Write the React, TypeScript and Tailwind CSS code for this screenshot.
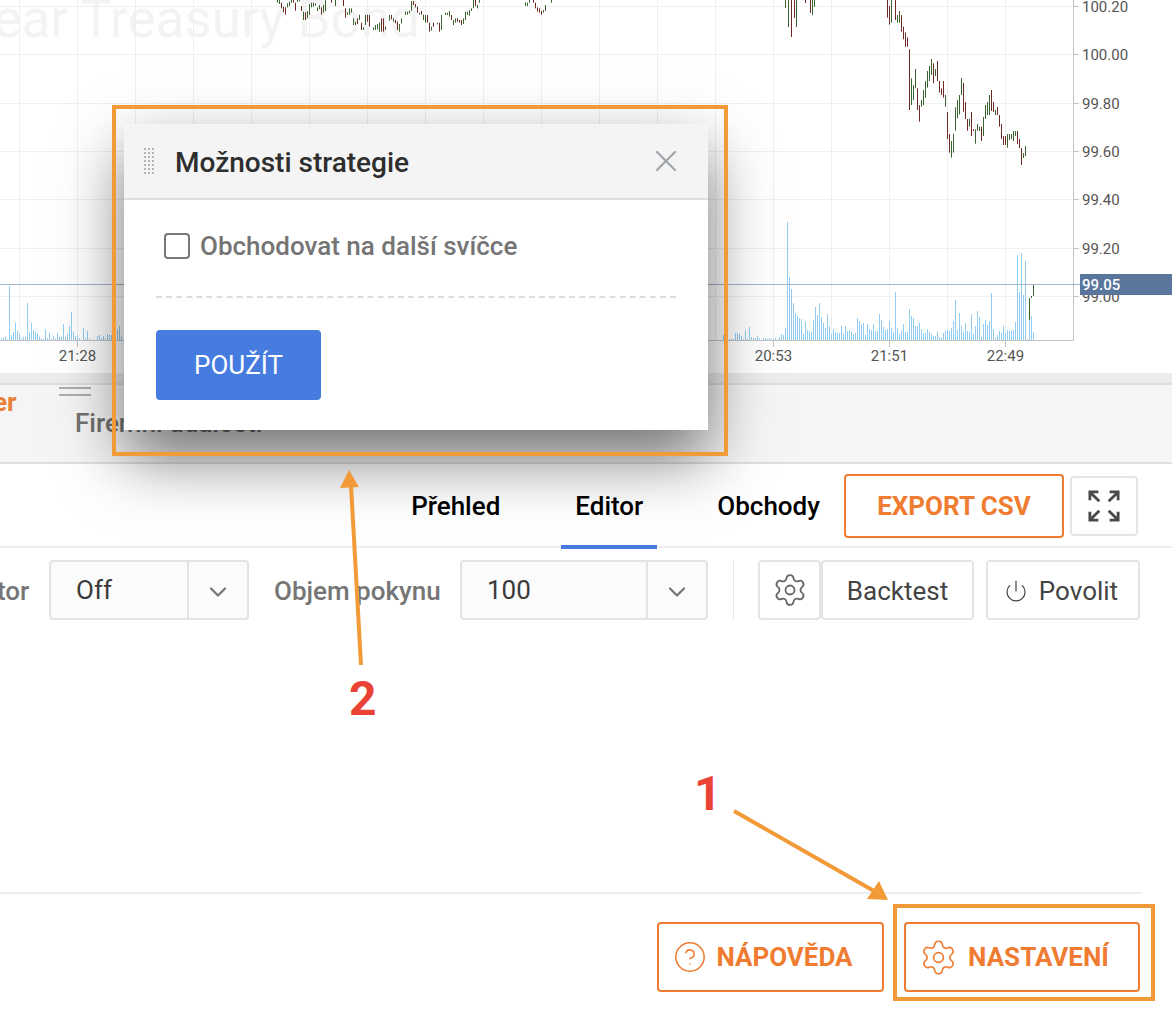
import React from 'react';
import { ChevronDown, CircleHelp, Power, Settings, X } from 'lucide-react';

type Bar = [number, number, number, 'r' | 'g'];

// candles traced from the chart, [x, top, bottom] in 3x crop coordinates
const leftBars: Bar[] = [
    [21,0,8,'g'],[27,0,12,'g'],[33,8,25,'r'],[39,20,37,'r'],[45,22,44,'r'],[51,10,22,'g'],[57,5,18,'g'],[63,0,8,'g'],[69,0,8,'r'],[75,8,32,'r'],[81,0,6,'g'],[87,0,4,'g'],[93,18,33,'r'],[99,35,60,'g'],[105,37,60,'r'],[111,33,55,'g'],[117,12,45,'g'],[123,8,22,'g'],[129,8,20,'g'],[135,10,17,'g'],[141,22,33,'g'],[147,15,27,'g'],[153,22,44,'r'],[159,15,38,'g'],[165,0,33,'g'],[183,0,8,'r'],[195,0,18,'g'],[219,0,18,'r'],[225,25,53,'r'],[231,37,45,'g'],[237,25,44,'g'],[243,25,38,'g'],[249,55,75,'g'],[255,65,75,'g'],[261,55,72,'r'],[267,44,60,'g'],[273,68,90,'r'],[279,82,90,'g'],[285,45,75,'g'],[291,44,65,'r'],[297,45,80,'r'],[309,82,90,'g'],[315,75,90,'g'],[321,72,88,'g'],[327,68,95,'g'],[333,55,95,'r'],[339,55,95,'r'],[345,80,90,'g'],[357,45,62,'g'],[363,45,58,'r'],[369,55,60,'r'],[375,60,68,'r'],[381,68,90,'r'],[387,72,95,'g'],
];
const midBars: Bar[] = [
    [3,45,55,'r'],[9,55,65,'g'],[15,60,70,'r'],[21,65,90,'r'],[27,72,92,'g'],[33,55,70,'g'],[45,35,45,'g'],[51,35,44,'g'],[57,32,40,'g'],[63,3,32,'g'],[69,3,15,'r'],[75,12,22,'r'],[81,20,38,'r'],[87,38,44,'g'],[93,33,44,'r'],[99,44,60,'g'],[105,45,68,'g'],[111,45,68,'r'],[117,68,95,'r'],[123,80,92,'g'],[129,68,80,'r'],[141,68,73,'g'],[147,68,95,'r'],[153,45,90,'g'],[165,38,45,'g'],[171,38,45,'g'],[177,33,50,'g'],[183,45,60,'r'],[189,60,75,'g'],[195,55,68,'g'],[201,55,65,'r'],[207,60,68,'r'],[213,60,75,'r'],[219,55,72,'g'],[225,35,60,'g'],[231,35,45,'g'],[237,30,47,'g'],[243,25,33,'g'],[249,0,25,'g'],[255,0,18,'r'],[261,15,25,'g'],[267,0,8,'g'],[405,8,18,'g'],[411,8,18,'g'],[417,0,8,'g'],[429,0,8,'r'],[435,8,25,'r'],[441,22,35,'r'],[447,25,38,'r'],[453,33,44,'r'],[459,30,38,'g'],[465,15,33,'g'],[483,0,8,'g'],
];
const rightBars: Bar[] = [
    [22,0,53,'r'],[28,18,74,'r'],[34,0,68,'g'],[46,0,60,'r'],[52,45,68,'g'],[58,33,68,'g'],[64,45,95,'r'],[70,80,118,'r'],[76,97,140,'r'],[82,112,140,'r'],[88,148,330,'r'],[94,235,315,'g'],[100,255,300,'g'],[106,207,265,'g'],[112,265,330,'r'],[118,315,365,'r'],[124,300,320,'g'],[130,270,315,'g'],[136,243,293,'g'],[142,213,263,'g'],[148,198,243,'g'],[154,177,225,'g'],[160,190,250,'r'],[166,207,228,'g'],[172,183,243,'r'],[178,243,278,'r'],[184,265,285,'r'],[190,243,293,'r'],[196,285,320,'g'],[202,336,417,'r'],[208,402,458,'r'],[214,423,473,'g'],[220,402,458,'g'],[226,322,392,'g'],[232,300,355,'g'],[238,285,343,'g'],[244,234,285,'g'],[250,249,335,'r'],[256,306,357,'r'],[262,357,392,'r'],[268,357,380,'g'],[274,336,408,'r'],[280,388,393,'r'],[286,388,431,'g'],[292,372,392,'g'],[298,380,393,'g'],[304,380,423,'r'],[310,351,408,'g'],[316,315,357,'g'],[322,306,345,'g'],[328,285,345,'g'],[334,270,333,'r'],[340,306,336,'r'],[346,330,345,'g'],[352,321,345,'r'],[358,345,380,'r'],[364,372,417,'r'],[370,408,435,'r'],[376,408,435,'r'],[382,402,443,'g'],[388,402,420,'g'],[394,402,417,'g'],[400,393,423,'g'],[406,393,408,'g'],[412,393,432,'r'],[418,417,444,'r'],[424,444,495,'r'],[430,459,474,'g'],[436,438,468,'g'],
];
const topBars: [number, number, number, 'r' | 'g'][] = [[785,0,8,'g'],[787.5,0,27,'g'],[791,0,37,'r'],[793.5,0,18,'r'],[795.5,0,27,'g'],[805,0,3,'r'],[809.5,0,13,'r'],[811.5,0,15,'g'],[813.5,0,7,'g']];

// volume bar tops
const volLeft = [205,203,200,208,48,195,186,158,183,192,205,200,200,98,186,158,180,186,190,200,205,207,178,205,188,207,198,205,188,200,200,162,200,192,168,126,185,198,195,205,210,174,205,183,205,210,208,210,198,195,205,198,205,192,194,195,210,210,178,168,200];
const volRight = [375,390,390,387,387,387,369,369,372,378,387,360,387,351,381,384,384,378,384,390,384,384,387,384,387,387,384,387,381,372,375,354,36,201,237,279,309,318,324,327,372,336,360,363,366,330,291,315,279,321,339,354,312,348,372,357,366,369,369,348,372,348,363,360,366,372,369,324,333,342,339,375,342,357,360,342,363,363,312,330,351,360,357,333,354,366,246,354,372,363,342,366,366,297,318,324,348,348,339,357,369,369,357,366,372,378,378,366,381,384,369,363,360,363,354,333,270,360,309,348,366,339,363,366,312,372,348,303,321,381,342,330,345,333,249,357,384,375,363,369,348,369,360,363,363,360,336,135,246,129,255,153,387,330,318,366];

const gridX = Array.from({ length: 18 }, (_, i) => 19.4 + 58 * i);
const priceRows = [
    { y: 6, label: '100.20' },
    { y: 54, label: '100.00' },
    { y: 102.5, label: '99.80' },
    { y: 151, label: '99.60' },
    { y: 199, label: '99.40' },
    { y: 247.5, label: '99.20' },
    { y: 296, label: '99.00' },
];
const times = [
    { x: 77.4, label: '21:28' },
    { x: 773.4, label: '20:53' },
    { x: 889.4, label: '21:51' },
    { x: 1005.4, label: '22:49' },
];

const candleColor = (c: 'r' | 'g') => (c === 'r' ? '#6e2a24' : '#3c6431');

const Candles: React.FC<{ bars: Bar[]; x0: number }> = ({ bars, x0 }) => (
    <>
        {bars.map(([x, a, b, c]) => (
            <rect key={x} x={Math.round(x0 + x / 3)} y={a / 3} width={1} height={(b - a) / 3} fill={candleColor(c)} />
        ))}
    </>
);

const Chart: React.FC = () => (
    <svg width={1172} height={373} className="block" style={{ fontFamily: 'Roboto, sans-serif' }}>
        <text x={420} y={37} textAnchor="end" fontSize={53} fill="#f3f3f3">10 Year Treasury Bond</text>
        {gridX.map(x => <rect key={x} x={Math.round(x)} y={0} width={1} height={340} fill="#efefef" />)}
        {priceRows.map(r => <rect key={r.y} x={0} y={Math.round(r.y)} width={1073} height={1} fill="#efefef" />)}

        {volLeft.map((top, i) => <rect key={i} x={1 + i * 2} y={270 + top / 3} width={1} height={(210 - top) / 3} fill="#93cbf1" />)}
        {volRight.map((top, i) => <rect key={i} x={723 + i * 2} y={210 + top / 3} width={1} height={(390 - top) / 3} fill="#93cbf1" />)}

        <Candles bars={leftBars} x0={270} />
        <Candles bars={midBars} x0={390} />
        <Candles bars={rightBars} x0={880} />
        {topBars.map(([x, a, b, c]) => <rect key={x} x={Math.round(x)} y={a} width={1} height={b - a} fill={candleColor(c)} />)}
        <rect x={1029} y={298} width={1} height={22} fill="#3c6431" />
        <rect x={1031} y={296} width={1} height={2} fill="#3c6431" />
        <rect x={1033} y={284} width={1} height={12} fill="#3c6431" />

        {/* axes */}
        <rect x={0} y={340} width={1074} height={1} fill="#c4c4c4" />
        <rect x={1073} y={0} width={1} height={341} fill="#c4c4c4" />
        {priceRows.map(r => (
            <g key={r.label}>
                <rect x={1074} y={Math.round(r.y)} width={5} height={1} fill="#c4c4c4" />
                <text x={1082} y={r.y + 6} fontSize={15} fill="#555555">{r.label}</text>
            </g>
        ))}
        {times.map(t => (
            <g key={t.label}>
                <rect x={Math.round(t.x)} y={341} width={1} height={6} fill="#c4c4c4" />
                <text x={t.x} y={361} fontSize={15} textAnchor="middle" fill="#555555">{t.label}</text>
            </g>
        ))}

        {/* current price */}
        <rect x={0} y={284} width={1080} height={1} fill="#a4b4ca" />
        <rect x={1080} y={274} width={92} height={21} fill="#5a769c" />
        <text x={1082} y={290} fontSize={15} fontWeight={500} fill="#ffffff">99.05</text>
    </svg>
);

const Select: React.FC<{ value: string; width: string; valueWidth: string }> = ({ value, width, valueWidth }) => (
    <div className={`flex h-[60px] shrink-0 rounded border-2 border-[#e3e3e3] bg-[#fbfbfb] ${width}`}>
        <div className={`flex items-center border-r-2 border-[#e3e3e3] pl-[25px] text-[26px] text-[#3a3a3a] ${valueWidth}`}>{value}</div>
        <div className="flex flex-1 items-center justify-center pt-[3px]">
            <ChevronDown size={28} strokeWidth={2} className="text-[#777777]" />
        </div>
    </div>
);

const FullscreenIcon: React.FC = () => (
    <svg width={32} height={32} viewBox="0 0 34 34" fill="none" stroke="#4a4a4a" strokeWidth={3}>
        <path d="M2 11V2h9M2 2l10 10" />
        <path d="M32 11V2h-9M32 2L22 12" />
        <path d="M2 23v9h9M2 32l10-10" />
        <path d="M32 23v9h-9M32 32L22 22" />
    </svg>
);

const OutlineButton: React.FC<{ className: string; icon: React.ReactNode; label: string }> = ({ className, icon, label }) => (
    <button className={`flex h-[70px] items-center justify-center rounded border-2 border-[#ef7c30] text-[26px] font-bold text-[#ef7c30] ${className}`}>
        {icon}
        {label}
    </button>
);

const GripDots: React.FC = () => (
    <div className="grid grid-cols-3 gap-x-[2px] gap-y-[2px]">
        {Array.from({ length: 21 }, (_, i) => <span key={i} className="h-[2px] w-[2px] bg-[#b5b5b5]" />)}
    </div>
);

const OptionsModal: React.FC = () => (
    <div className="absolute left-[124px] top-[124px] w-[584px] h-[306px] bg-white shadow-[0_28px_60px_rgba(0,0,0,0.54)]">
        <div className="flex h-[76px] items-center border-b-2 border-[#dddddd] bg-[#f4f4f4] pl-5 pr-[24px]">
            <GripDots />
            <h2 className="ml-[21px] flex-1 pt-[3px] text-[28px] font-medium text-[#2e2e2e]">Možnosti strategie</h2>
            <X size={36} strokeWidth={1.5} className="text-[#a3a8ae]" />
        </div>
        <div className="flex flex-col px-8">
            <label className="mt-[32px] ml-2 flex h-[28px] items-center gap-[10px]">
                <span className="h-[26px] w-[26px] rounded border-2 border-[#777777]" />
                <span className="text-[26px] font-medium text-[#757575]">Obchodovat na další svíčce</span>
            </label>
            <div className="mt-[36px] border-t-2 border-dashed border-[#dddddd]" />
            <button className="mt-[32px] h-[70px] w-[165px] rounded bg-[#467be0] text-[26px] text-white">POUŽÍT</button>
        </div>
    </div>
);

const Annotations: React.FC = () => (
    <>
        <div className="absolute left-[112px] top-[105px] h-[351px] w-[616px] border-4 border-[#f29a38]" />
        <div className="absolute left-[893px] top-[904px] h-[97px] w-[262px] border-4 border-[#f29a38]" />
        <svg className="absolute left-0 top-0" width={1172} height={1024}>
            <path d="M361 665L351 485" stroke="#f29a38" strokeWidth={4} fill="none" />
            <path d="M349 470L340 488L359 487Z" fill="#f29a38" />
            <path d="M734 811L874 891" stroke="#f29a38" strokeWidth={4} fill="none" />
            <path d="M888 900L867 899L879 881Z" fill="#f29a38" />
        </svg>
        <span className="absolute left-[349px] top-[671px] text-[48px] font-bold leading-[56px] text-[#ea4335]">2</span>
        <span className="absolute left-[694px] top-[766px] text-[48px] font-bold leading-[56px] text-[#ea4335]">1</span>
    </>
);

const App: React.FC = () => {
    return (
        <div className="relative flex h-[1024px] w-[1172px] flex-col overflow-hidden bg-white" style={{ fontFamily: 'Roboto, sans-serif' }}>
            <Chart />

            {/* Splitter and panel tabs */}
            <div className="h-[10px] bg-[#ececec]" />
            <div className="relative h-[81px] border-y-2 border-[#dedede] bg-[#f5f5f5]">
                <span className="-ml-[7px] block pt-[5px] text-[26px] font-bold leading-6 text-[#e9803a]">er</span>
                <div className="absolute left-[59px] top-[2px] h-[9px] w-[32px] border-y-2 border-[#adadad]" />
                <span className="absolute left-[75px] top-[24px] text-[26px] font-medium leading-7 text-[#707070]">Firemní události</span>
            </div>

            {/* Tabs */}
            <div className="flex h-[84px] items-center justify-end border-b-2 border-[#eeeeee] pr-[34px] pt-[2px]">
                <a className="mr-[75px] text-[26px] font-medium text-black">Přehled</a>
                <a className="relative mr-[74px] text-[26px] font-medium text-black">
                    Editor
                    <span className="absolute -bottom-[23px] -left-[14px] -right-[14px] h-1 bg-[#467be0]" />
                </a>
                <a className="mr-[24px] text-[26px] font-medium text-black">Obchody</a>
                <button className="mr-[6px] h-[64px] w-[220px] rounded border-2 border-[#ef7c30] text-[26px] font-bold text-[#ef7c30]">EXPORT CSV</button>
                <button className="flex h-[60px] w-[68px] items-center justify-center rounded border-2 border-[#e5e5e5]">
                    <FullscreenIcon />
                </button>
            </div>

            {/* Toolbar */}
            <div className="mt-[12px] flex h-[60px] items-center">
                <span className="-ml-[3px] w-[52px] pt-[2px] text-[26px] font-medium text-[#757575]">tor</span>
                <Select value="Off" width="w-[200px]" valueWidth="w-[138px]" />
                <span className="ml-[25px] w-[186px] pt-[2px] text-[26px] font-medium text-[#757575]">Objem pokynu</span>
                <Select value="100" width="w-[248px]" valueWidth="w-[186px]" />
                <div className="ml-[25px] h-[60px] w-[1px] bg-[#e8e8e8]" />
                <button className="ml-[24px] flex h-[60px] w-[63px] items-center justify-center rounded border-2 border-[#e5e5e5]">
                    <Settings size={36} strokeWidth={1.2} className="text-[#666666]" />
                </button>
                <button className="h-[60px] w-[153px] rounded border-2 border-[#e5e5e5] pt-[2px] text-[26px] text-[#444444]">Backtest</button>
                <button className="ml-3 flex h-[60px] w-[154px] items-center justify-center gap-[11px] rounded border-2 border-[#e5e5e5] pr-1 pt-[2px] text-[26px] text-[#444444]">
                    <Power size={24} strokeWidth={1.2} />
                    Povolit
                </button>
            </div>

            {/* Footer */}
            <div className="mt-auto pb-[32px]">
                <div className="mr-[30px] border-t-2 border-[#eeeeee]" />
                <div className="mt-[28px] flex justify-end gap-5 pr-[32px]">
                    <OutlineButton className="w-[227px] gap-[9px] pr-[15px]" label="NÁPOVĚDA" icon={<CircleHelp size={34} strokeWidth={1.1} />} />
                    <OutlineButton className="w-[236px] gap-[10px] pr-[16px]" label="NASTAVENÍ" icon={<Settings size={39} strokeWidth={1} />} />
                </div>
            </div>

            <OptionsModal />
            <Annotations />
        </div>
    );
};

export default App;
